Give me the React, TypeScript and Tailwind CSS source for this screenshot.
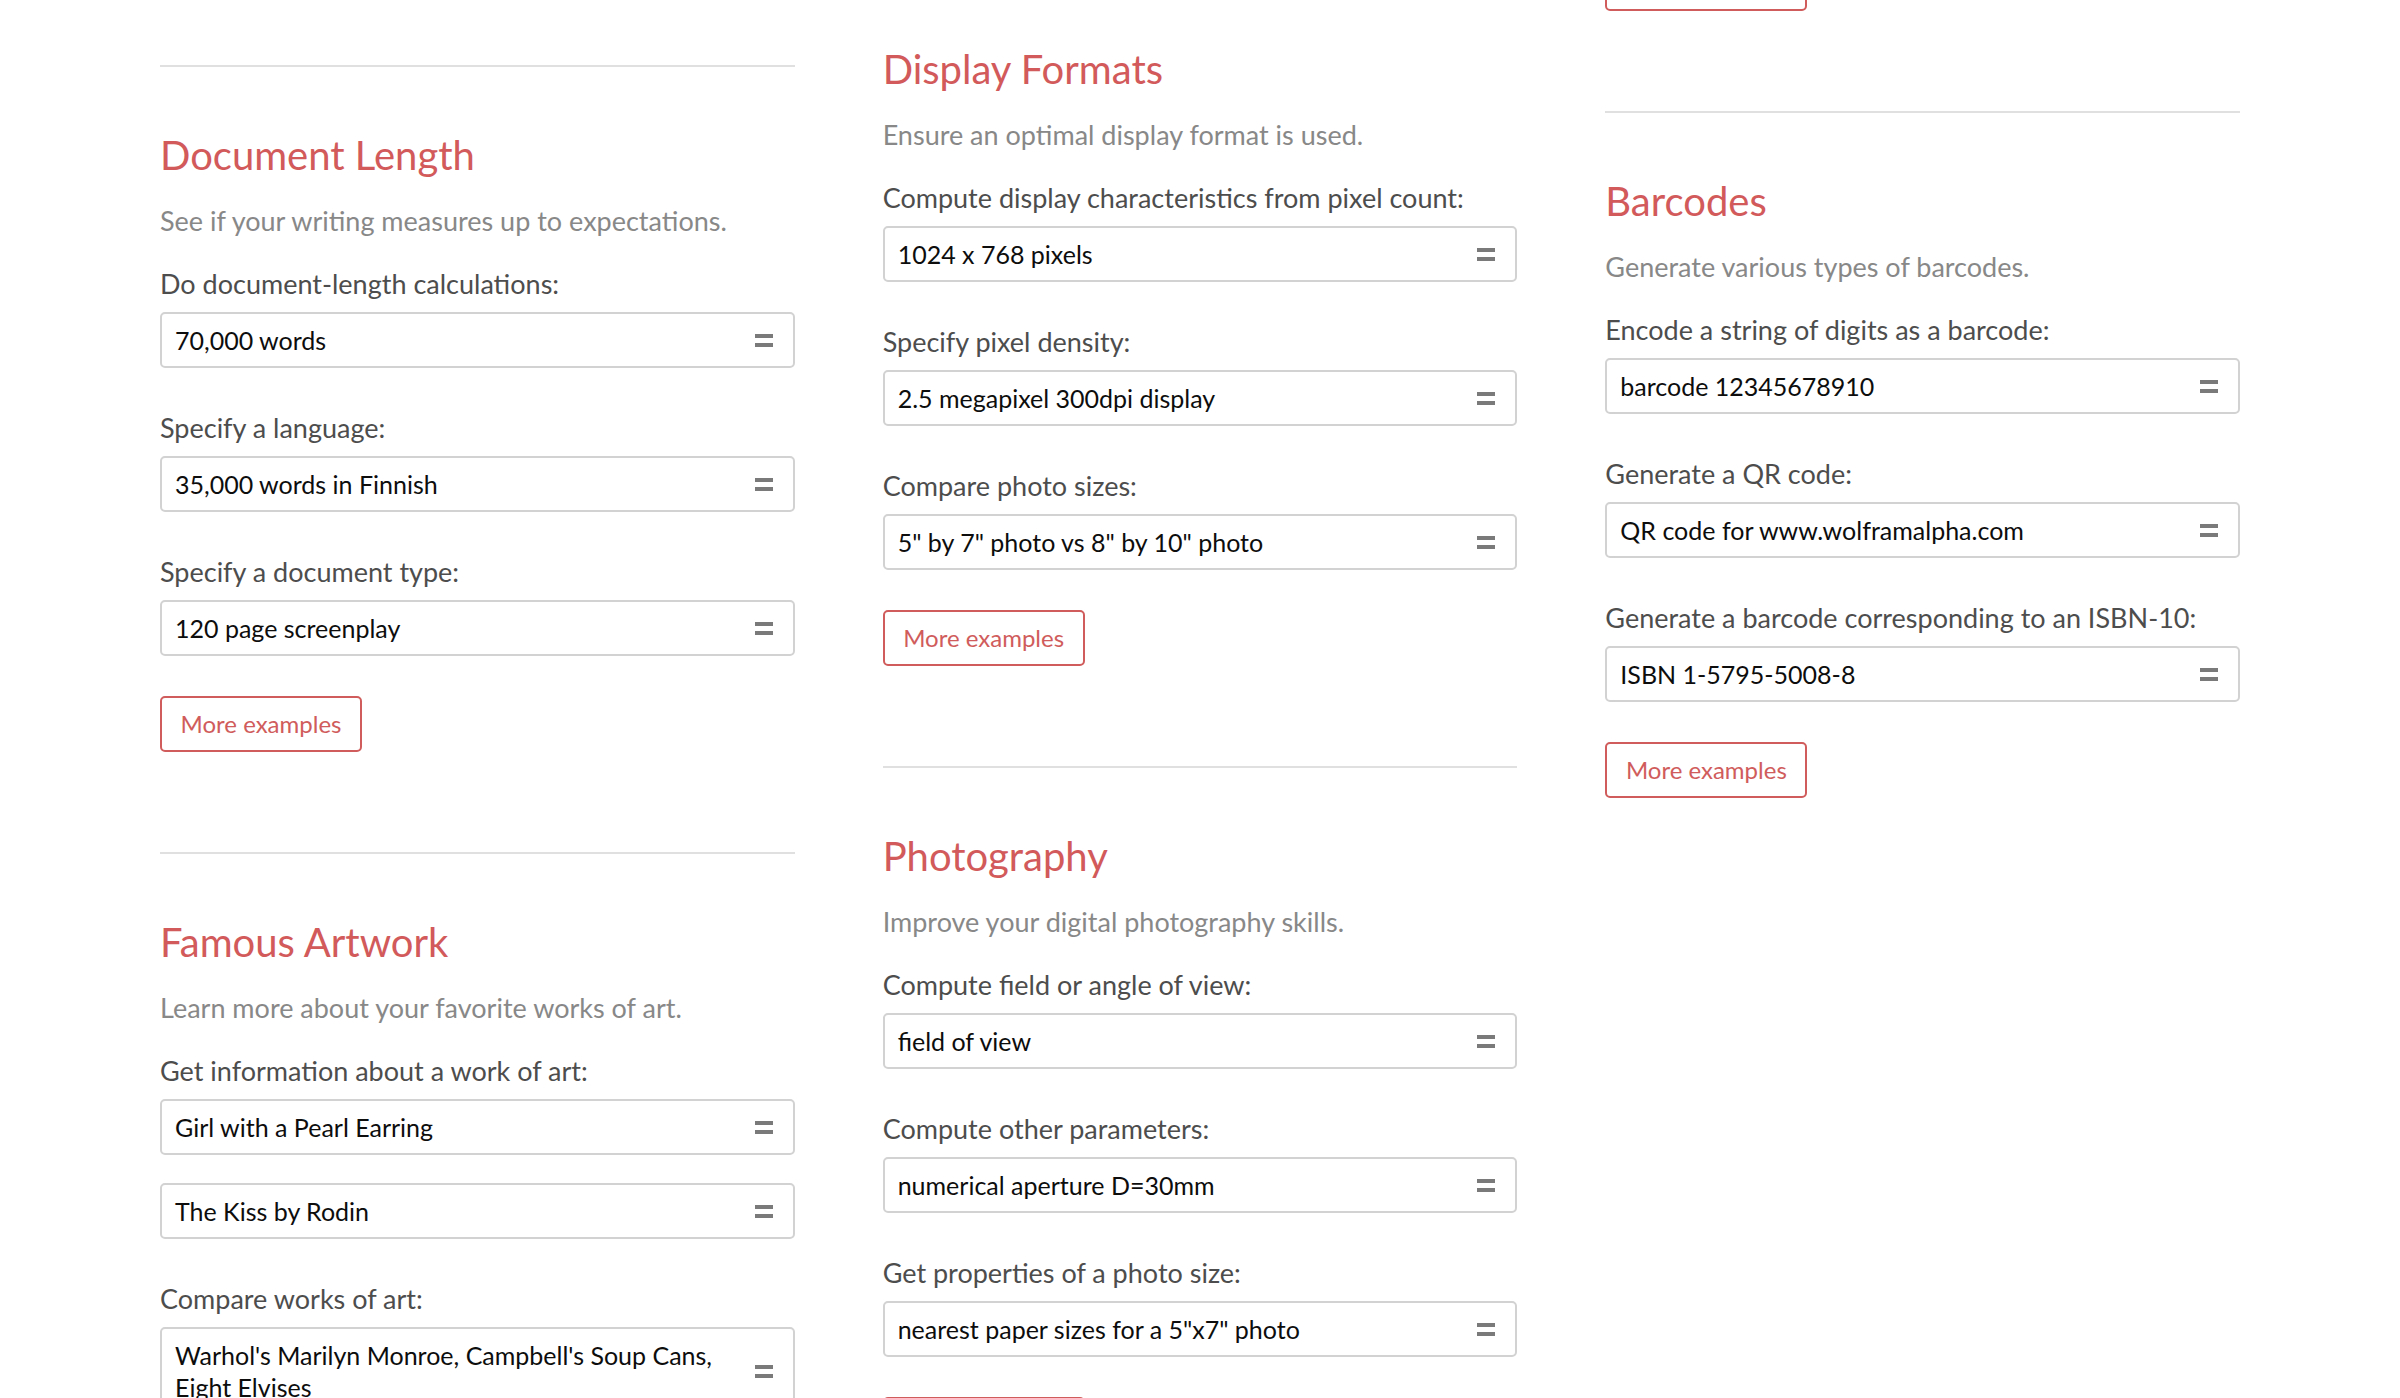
import React from "react";

type Group = { label: string; inputs: string[] };
type SectionData = { title: string; desc: string; groups: Group[] };

const FONT = { fontFamily: "Lato, 'Noto Sans', sans-serif" };

function EqIcon() {
  return (
    <span className="flex w-[18px] shrink-0 flex-col gap-[5px]">
      <span className="block h-[4px] w-full bg-[#7a7a7a]" />
      <span className="block h-[4px] w-full bg-[#7a7a7a]" />
    </span>
  );
}

function InputBox({ text }: { text: string }) {
  return (
    <div className="flex min-h-[56px] items-center rounded-[5px] border-2 border-[#d2d2d2] bg-white py-[10px] pl-[13px] pr-[20px]">
      <span className="flex-1 pr-[22px] text-[25px] leading-[32px] text-[#0d0d0d]">{text}</span>
      <EqIcon />
    </div>
  );
}

function MoreButton({ className = "" }: { className?: string }) {
  return (
    <div className={"flex " + className}>
      <div className="flex h-[56px] w-[202px] items-center justify-center rounded-[5px] border-2 border-[#d05c5c] text-[24px] text-[#d05c5c]">
        More examples
      </div>
    </div>
  );
}

function Section({ data }: { data: SectionData }) {
  return (
    <div className="flex flex-col pb-[100px]">
      <div className="h-[2px] bg-[#e0e0e0]" />
      <h2 className="mt-[62px] text-[40px] leading-[52px] font-normal text-[#d25a5a]">{data.title}</h2>
      <p className="mt-[22px] text-[27px] leading-[36px] text-[#888888]">{data.desc}</p>
      {data.groups.map((g, gi) => (
        <div key={gi} className={gi === 0 ? "mt-[27px] flex flex-col" : "mt-[42px] flex flex-col"}>
          <div className="mb-[10px] text-[27px] leading-[36px] text-[#4d4d4d]">{g.label}</div>
          <div className="flex flex-col gap-[28px]">
            {g.inputs.map((t, ti) => (
              <InputBox key={ti} text={t} />
            ))}
          </div>
        </div>
      ))}
      <MoreButton className="mt-[40px]" />
    </div>
  );
}

const docLength: SectionData = {
  title: "Document Length",
  desc: "See if your writing measures up to expectations.",
  groups: [
    { label: "Do document-length calculations:", inputs: ["70,000 words"] },
    { label: "Specify a language:", inputs: ["35,000 words in Finnish"] },
    { label: "Specify a document type:", inputs: ["120 page screenplay"] },
  ],
};

const artwork: SectionData = {
  title: "Famous Artwork",
  desc: "Learn more about your favorite works of art.",
  groups: [
    { label: "Get information about a work of art:", inputs: ["Girl with a Pearl Earring", "The Kiss by Rodin"] },
    { label: "Compare works of art:", inputs: ["Warhol's Marilyn Monroe, Campbell's Soup Cans, Eight Elvises"] },
  ],
};

const display: SectionData = {
  title: "Display Formats",
  desc: "Ensure an optimal display format is used.",
  groups: [
    { label: "Compute display characteristics from pixel count:", inputs: ["1024 x 768 pixels"] },
    { label: "Specify pixel density:", inputs: ["2.5 megapixel 300dpi display"] },
    { label: "Compare photo sizes:", inputs: ['5" by 7" photo vs 8" by 10" photo'] },
  ],
};

const photo: SectionData = {
  title: "Photography",
  desc: "Improve your digital photography skills.",
  groups: [
    { label: "Compute field or angle of view:", inputs: ["field of view"] },
    { label: "Compute other parameters:", inputs: ["numerical aperture D=30mm"] },
    { label: "Get properties of a photo size:", inputs: ['nearest paper sizes for a 5"x7" photo'] },
  ],
};

const barcodes: SectionData = {
  title: "Barcodes",
  desc: "Generate various types of barcodes.",
  groups: [
    { label: "Encode a string of digits as a barcode:", inputs: ["barcode 12345678910"] },
    { label: "Generate a QR code:", inputs: ["QR code for www.wolframalpha.com"] },
    { label: "Generate a barcode corresponding to an ISBN-10:", inputs: ["ISBN 1-5795-5008-8"] },
  ],
};

export default function App() {
  return (
    <div className="h-[1398px] w-full overflow-hidden bg-white" style={FONT}>
      <div className="grid grid-cols-3 gap-x-[88px] px-[160px]">
        <div className="flex flex-col pt-[65px]">
          <Section data={docLength} />
          <Section data={artwork} />
        </div>
        <div className="mt-[-21px] flex flex-col">
          <Section data={display} />
          <Section data={photo} />
        </div>
        <div className="mt-[-45px] flex flex-col">
          <MoreButton className="mb-[100px]" />
          <Section data={barcodes} />
        </div>
      </div>
    </div>
  );
}
